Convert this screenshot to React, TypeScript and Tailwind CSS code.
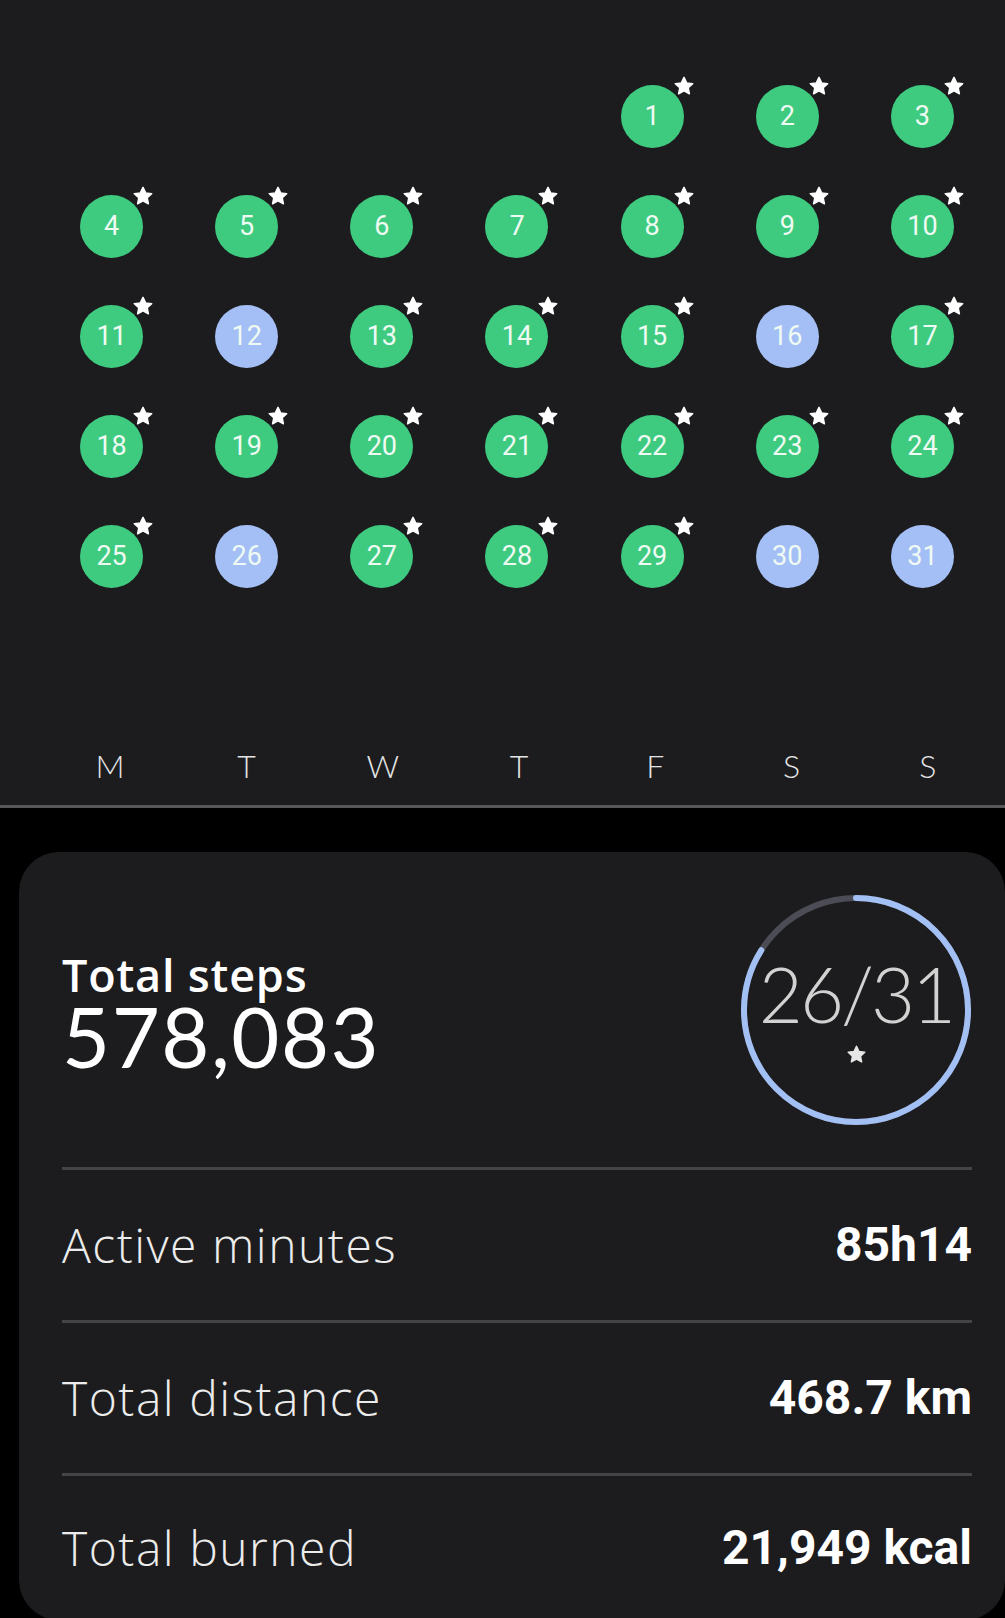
import React from "react"

const GREEN = "bg-[#3ecb80]"
const BLUE = "bg-[#a3bff5]"

// days without a star (goal missed)
const missed = [12, 16, 26, 30, 31]

const weekdays = ["M", "T", "W", "T", "F", "S", "S"]

function Star({ className }: { className?: string }) {
  return (
    <svg viewBox="0 0 24 24" className={className} fill="currentColor" stroke="currentColor" strokeWidth="1.6" strokeLinejoin="round">
      <polygon points="12,2.5 14.9,8.6 21.5,9.4 16.6,13.9 17.9,20.5 12,17.2 6.1,20.5 7.4,13.9 2.5,9.4 9.1,8.6" />
    </svg>
  )
}

function DayDot({ day }: { day: number }) {
  const hit = !missed.includes(day)
  return (
    <div className="relative w-[63px] h-[63px]">
      <div
        className={`w-full h-full rounded-full flex items-center justify-center text-[27px] text-[#effaf3] ${hit ? GREEN : BLUE}`}
        style={{ fontFamily: "Roboto, 'Noto Sans', sans-serif" }}
      >
        {day}
      </div>
      {hit && <Star className="absolute left-[52px] top-[-10px] w-[22px] h-[22px] text-white" />}
    </div>
  )
}

function ProgressRing({ done, total }: { done: number; total: number }) {
  const r = 112
  const c = 2 * Math.PI * r
  const len = (done / total) * c
  return (
    <div className="relative w-[232px] h-[232px] shrink-0">
      <svg viewBox="0 0 232 232" className="absolute inset-0 w-full h-full -rotate-90">
        <circle cx="116" cy="116" r={r} fill="none" stroke="#4b4c55" strokeWidth="6" />
        <circle
          cx="116"
          cy="116"
          r={r}
          fill="none"
          stroke="#a3c0f5"
          strokeWidth="6"
          strokeLinecap="round"
          strokeDasharray={`${len} ${c}`}
        />
      </svg>
      <div className="absolute inset-0 flex flex-col items-center">
        <span
          className="mt-[62px] text-[76px] leading-[76px] font-light tracking-[-3px] text-[#d2d2d2]"
          style={{ fontFamily: "Lato, 'Noto Sans', sans-serif" }}
        >
          {done}/{total}
        </span>
        <Star className="mt-[12px] w-[21px] h-[21px] text-[#e6e6e6]" />
      </div>
    </div>
  )
}

function StatRow({ label, value, last }: { label: string; value: string; last?: boolean }) {
  return (
    <div className="border-t-[3px] border-[#444446]">
      <div className={`flex items-center justify-between ${last ? "h-[144px]" : "h-[150px]"}`}>
        <span
          className="text-[48px] font-light tracking-[1.5px] text-[#ececec]"
          style={{ fontFamily: "'Open Sans', 'Noto Sans', sans-serif" }}
        >
          {label}
        </span>
        <span
          className="text-[48px] font-bold text-white"
          style={{ fontFamily: "Roboto, 'Noto Sans', sans-serif" }}
        >
          {value}
        </span>
      </div>
    </div>
  )
}

export default function App() {
  // month starts on a Friday
  const cells: (number | null)[] = [null, null, null, null]
  for (let d = 1; d <= 31; d++) cells.push(d)

  return (
    <div className="w-[1005px] h-[1618px] overflow-hidden bg-black">
      {/* Calendar */}
      <div className="h-[805px] bg-[#1c1c1e] flex flex-col">
        <div className="pt-[61px] pl-[44px] pr-[15px] grid grid-cols-7">
          {cells.map((d, i) => (
            <div key={i} className="h-[110px] flex items-center justify-center">
              {d !== null && <DayDot day={d} />}
            </div>
          ))}
        </div>
        <div
          className="mt-[135px] pl-[42px] pr-[9px] grid grid-cols-7 text-[32px] leading-[40px] font-light text-[#e4e4e4]"
          style={{ fontFamily: "Lato, 'Noto Sans', sans-serif" }}
        >
          {weekdays.map((w, i) => (
            <div key={i} className="text-center">{w}</div>
          ))}
        </div>
      </div>
      <div className="h-[3px] bg-[#58585a]" />

      {/* Summary card */}
      <div className="mt-[44px] ml-[19px] rounded-[40px] bg-[#1c1c1e] pl-[43px] pr-[33px]">
        <div className="h-[315px] flex items-center justify-between">
          <div className="mt-[10px] text-white">
            <div
              className="text-[45px] leading-[42px] font-semibold tracking-[0.8px]"
              style={{ fontFamily: "'Open Sans', 'Noto Sans', sans-serif" }}
            >
              Total steps
            </div>
            <div
              className="text-[83px] leading-[80px] font-normal tracking-[1.5px]"
              style={{ fontFamily: "Lato, 'Noto Sans', sans-serif" }}
            >
              578,083
            </div>
          </div>
          <ProgressRing done={26} total={31} />
        </div>
        <StatRow label="Active minutes" value="85h14" />
        <StatRow label="Total distance" value="468.7 km" />
        <StatRow label="Total burned" value="21,949 kcal" last />
      </div>
    </div>
  )
}
